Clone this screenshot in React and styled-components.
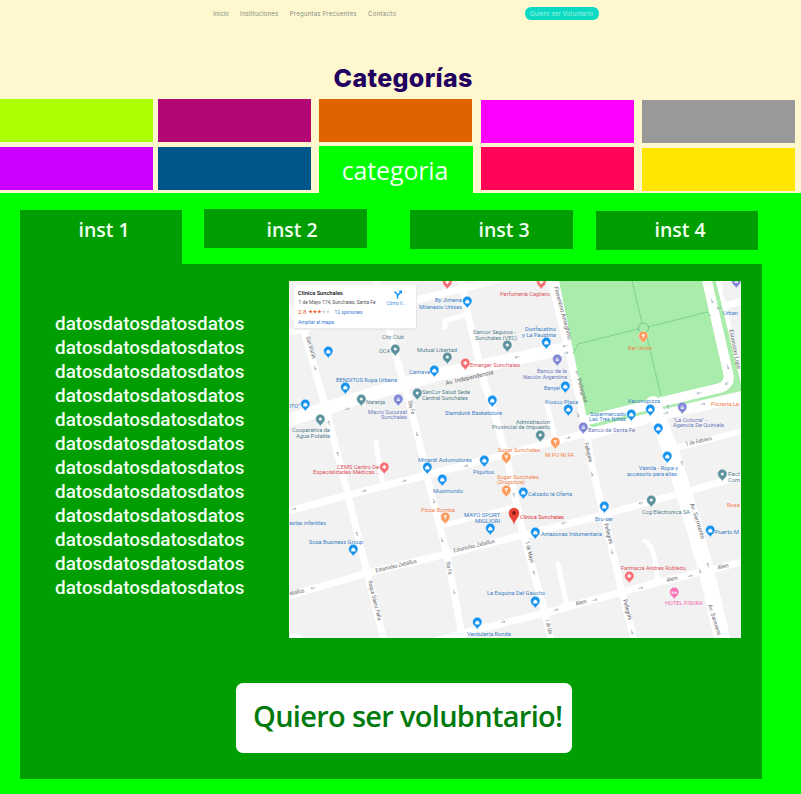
import React from 'react';
import styled, { createGlobalStyle } from 'styled-components';

const GlobalStyle = createGlobalStyle`
  * { box-sizing: border-box; }
  body { margin: 0; background: #fff8cf; }
  a { text-decoration: none; color: inherit; }
`;

const Page = styled.div`
  width: 801px;
  height: 794px;
  overflow: hidden;
  display: flex;
  flex-direction: column;
  background: #fff8cf;
  font-family: Roboto, sans-serif;
`;

const Header = styled.header`
  display: flex;
  align-items: center;
  height: 27px;
  padding-left: 213px;
  font-family: Inter, sans-serif;
  font-size: 6px;
`;

const Nav = styled.nav`
  display: flex;
  gap: 11.4px;
  width: 311.5px;
  color: #858c88;
`;

const NavLink = styled.a`
  white-space: nowrap;
  letter-spacing: ${(p) => p.$track}px;
`;

const VolunteerLink = styled.a`
  width: 74px;
  height: 13px;
  border-radius: 6px;
  background: #0cd9c4;
  color: #a5f3df;
  text-align: center;
  line-height: 13px;
  letter-spacing: 0.18px;
  white-space: nowrap;
`;

const Title = styled.h1`
  margin: 0;
  height: 72px;
  padding: 36px 0 0 333.5px;
  font: 800 25px/30px Inter, sans-serif;
  letter-spacing: 0.35px;
  color: #220060;
`;

const Categories = styled.div`
  display: grid;
  grid-template-columns: 158px 161px 162px 161px 153px;
  grid-template-rows: 48px 46px;
  height: 94px;
`;

const Category = styled.div`
  width: 153px;
  height: 43px;
  margin-top: ${(p) => p.$top || 0}px;
  background: ${(p) => p.$color};
`;

const ActiveCategory = styled.div`
  width: 154px;
  height: 47px;
  margin-top: -1px;
  background: #00ff00;
  color: #effff0;
  font: 400 25px/48px 'Open Sans', sans-serif;
  text-align: center;
  letter-spacing: -0.15px;
  padding-right: 2px;
`;

const Body = styled.main`
  flex: 1;
  background: #00ff00;
  padding: 16px 39px 15px 20px;
`;

const Tabs = styled.div`
  display: flex;
  height: 55px;
`;

const Tab = styled.div`
  width: ${(p) => p.$width}px;
  height: ${(p) => (p.$active ? 54 : 39)}px;
  margin: ${(p) => p.$top}px 0 0 ${(p) => p.$left}px;
  padding-left: ${(p) => p.$inset}px;
  background: #009e00;
  color: #effff0;
  font: 600 19.5px/${(p) => p.$line}px 'Open Sans', sans-serif;
  white-space: nowrap;
`;

const Panel = styled.section`
  width: 742px;
  height: 515px;
  background: #009e00;
  padding-top: 17px;
`;

const Content = styled.div`
  display: grid;
  grid-template-columns: 234px 452px;
  padding-left: 35px;
  height: 357px;
`;

const DataList = styled.ul`
  list-style: none;
  margin: 0;
  padding: 31px 0 0;
  color: #effff0;
  font: 500 18.9px/24px Roboto, sans-serif;
`;

const DataRow = styled.li`
  height: 24px;
`;

const VolunteerButton = styled.button`
  display: block;
  width: 336px;
  height: 70px;
  margin: 45px 0 0 216px;
  padding: 0 0 4px 17px;
  border: 0;
  border-radius: 7px;
  background: #fff;
  color: #007a0c;
  font: 600 29px/66px 'Open Sans', sans-serif;
  letter-spacing: -0.7px;
  text-align: left;
  white-space: nowrap;
`;

const MapView = styled.svg`
  display: block;
  width: 452px;
  height: 357px;
  background: #f2f2f2;
  font-family: Roboto, sans-serif;
`;

const Road = styled.path`
  fill: none;
  stroke: #fff;
  stroke-width: ${(p) => p.$w || 7};
  stroke-linecap: round;
  stroke-linejoin: round;
`;

const Trail = styled.path`
  fill: none;
  stroke: #5fbd7b;
  stroke-width: 0.8;
  stroke-dasharray: 2 0.7;
`;

const Label = styled.text`
  font-size: ${(p) => p.$size || 6}px;
  font-weight: ${(p) => p.$weight || 400};
  fill: ${(p) => p.$color};
`;

const BLUE = '#3b7fc4';
const TEAL = '#54808c';
const RED = '#e0525c';
const ORANGE = '#f5824a';
const VIOLET = '#7078bd';
const STREET = '#65696e';

const PIN = {
  shop: '#1591ee',
  slate: '#5b929e',
  red: '#f46e72',
  orange: '#fb9a5a',
  violet: '#7d86d4',
  pink: '#f673b6',
};

const roads = [
  ['M289 308L304 331L325 405L348 495L367 572L384 641'],
  ['M289 332L304 329L417 300L500 279'],
  ['M376 281L403 381L409 400L427 475L438 520L447 555L463 640'],
  ['M461 281L468 315L485 385L493 408L507 460L523 533L545 614L551 640'],
  ['M583 403L590 457L604 516L622 592L634 640'],
  ['M289 420L365 396L435 375L568 348', 13],
  ['M289 511L348 495L427 475L507 454L582 434L658 415'],
  ['M289 596L367 573L447 554L523 535L603 515L685 492L742 476', 7],
  ['M428 643L463 633L545 613L622 592L655 583L707 571L742 562', 7],
  ['M680 447L742 431', 6],
  ['M376 442L383 487', 5],
  ['M547 405L555 438', 5],
  ['M558 564L567 606', 5],
  ['M645 541Q655 545 658 583', 5],
  ['M445 327L445 321L467 314', 5],
  ['M441 526L513 507', 5],
  ['M289 638Q295 633 300 638', 5],
];

const shopPins = [
  [467, 302], [328, 352], [434, 371], [345, 388], [546, 343], [565, 387],
  [568, 410], [492, 401], [305, 405], [631, 415], [650, 410], [658, 429],
  [667, 457], [484, 461], [427, 468], [442, 480], [523, 493], [604, 507],
  [490, 529], [535, 533], [353, 550], [535, 602], [477, 623], [710, 531],
];

const pins = [
  ...shopPins.map(([x, y]) => [x, y, 'shop']),
  [395, 350, 'slate'], [447, 358, 'slate'], [507, 346, 'slate'],
  [417, 394, 'slate'], [361, 400, 'slate'], [320, 420, 'slate'],
  [540, 436, 'slate'], [651, 501, 'slate'], [722, 475, 'slate'],
  [447, 283, 'red'], [541, 283, 'red'], [465, 364, 'red'],
  [384, 468, 'red'], [629, 577, 'red'],
  [643, 337, 'orange'], [506, 458, 'orange'], [506, 491, 'orange'],
  [555, 443, 'orange'], [445, 518, 'orange'],
  [557, 360, 'violet'], [398, 400, 'violet'], [583, 428, 'violet'],
  [682, 408, 'violet'], [736, 282, 'violet'],
  [674, 593, 'pink'],
];

/* text, x, baseline, width, colour */
const labels = [
  ['City Club', 382, 338.5, 22, TEAL],
  ['OCA', 379, 353, 11, TEAL],
  ['Mutual Libertad', 417, 352, 40, TEAL],
  ['Carnave', 409, 373.5, 21, BLUE],
  ['BENDITOS Ropa Urbana', 336, 381.5, 61, BLUE],
  ['Naranja', 366, 404, 19, TEAL],
  ['By Jimena', 435, 302, 27, BLUE],
  ['Milanesio Unisex', 419, 308.5, 43, BLUE],
  ['Perfumería Cagliero', 500, 295.5, 50, RED],
  ['Sancor Seguros -', 473, 333.5, 43, TEAL],
  ['Sunchales (VEC)', 475, 340, 42, TEAL],
  ['Donfaustino', 525, 330.5, 31, BLUE],
  ['y La Faustina', 522, 337, 34, BLUE],
  ['Emerger Sunchales', 470, 366.5, 50, RED],
  ['Banco de la', 537, 373, 30, VIOLET],
  ['Nación Argentina', 523, 379, 44, VIOLET],
  ['Banyel', 544, 390, 16, BLUE],
  ['Kiosco Plaza', 545, 403.5, 33, BLUE],
  ['SanCor Salud Sede', 422, 394, 48, TEAL],
  ['Central Sunchales', 422, 400, 46, TEAL],
  ['Macro Sucursal', 368, 413.5, 39, VIOLET],
  ['Sunchales', 381, 419, 26, VIOLET],
  ['ITO"', 289.5, 407.5, 10.5, BLUE],
  ['Cooperativa de', 292, 432, 38, TEAL],
  ['Agua Potable', 296, 437.5, 34, TEAL],
  ['Slamdunk Basketstore', 445, 414.5, 57, BLUE],
  ['Admistracion', 516, 423.5, 34, TEAL],
  ['Provincial de Impuesto', 492, 429, 58, TEAL],
  ['Bar Unión', 628, 350, 24, ORANGE],
  ['Keconopizza', 628, 402.5, 32, BLUE],
  ['Urban', 723, 314.5, 15, BLUE],
  ['Pizzería La', 711, 405.5, 28, ORANGE],
  ['Supermercado', 590, 415.5, 36, BLUE],
  ['Las Tres Niñas', 589, 421, 37, BLUE],
  ['Banco de Santa Fe', 588, 431.5, 47, VIOLET],
  ['"La Cotorra" -', 673, 421.5, 34, VIOLET],
  ['Agencia De Quiniela', 673, 427, 51, VIOLET],
  ['Vainila - Ropa y', 639, 470, 39, BLUE],
  ['accesorio para ellas', 627, 475.5, 50, BLUE],
  ['Bru-ser', 595, 520.5, 18, BLUE],
  ['Ccg Electronica SA', 642, 513.5, 48, TEAL],
  ['Fact', 728, 476, 12, TEAL],
  ['Com', 728, 481.5, 12, TEAL],
  ['Rosa', 727, 506.5, 13, ORANGE],
  ['Minardi Automotores', 418, 461.5, 54, BLUE],
  ['CEMS Centro De', 337, 468.5, 42, RED],
  ['Especialidades Médicas...', 313, 474, 66, RED],
  ['Musimundo', 433, 493, 30, BLUE],
  ['Piquitos', 473, 473.5, 21, BLUE],
  ['Sugar Sunchales', 498, 451.5, 42, ORANGE],
  ['Sugar Sunchales', 497, 478.5, 42, ORANGE],
  ['(Drugstore)', 497, 484, 28, ORANGE],
  ['NI FU NI FA', 545, 456.5, 29, ORANGE],
  ['Calzado la Oferta', 528, 495.5, 44, BLUE],
  ['Clinica Sunchales', 520, 519, 44, '#dc3039'],
  ['MAYO SPORT', 464, 517, 36, BLUE],
  ['MIGLIORI', 475, 522.5, 25, BLUE],
  ['Pizza Bomba', 421, 511.5, 34, ORANGE],
  ['estas infantiles', 289.5, 525, 36.5, BLUE],
  ['Sosa Business Group', 309, 543.5, 54, BLUE],
  ['Amazonas Indumentaria', 541, 536, 61, BLUE],
  ['Puerto M', 715, 533.5, 24, BLUE],
  ['Farmacia Andres Robledo', 621, 570, 65, RED],
  ['HOTEL FISURA', 665, 604.5, 38, '#f06ab0'],
  ['La Esquina Del Gaucho', 487, 594.5, 58, BLUE],
  ['Verdulería Ronda', 467, 636, 44, BLUE],
];

/* text, x, y, width, rotation */
const streets = [
  ['San Martín', 306, 337, 23, 74],
  ['Florentino Ameghino', 554, 287, 55, 75],
  ['Av. Independencia', 446, 385, 49, -13],
  ['Pellegrini', 577, 379, 25, 74],
  ['Estanislao Lope', 729, 330, 40, 78],
  ['Sta Fe', 408, 401, 14, 76],
  ['Pellegrini', 584, 443, 20, 76],
  ['1 de Febrero', 686, 446, 27, -13],
  ['Av. Sarmiento', 690, 504, 37, 72],
  ['Av. Sarmient', 708, 605, 32, 73],
  ['Estanislao Zeballos', 376, 572.5, 42, -13.5],
  ['Estanislao Zeballos', 454, 552.5, 42, -13.5],
  ['eballos', 290, 595.5, 15, -13],
  ['Roque Sáenz Peña', 368, 581, 41, 76],
  ['Sta Fe', 446, 562, 13, 79],
  ['1 de Mayo', 525, 542, 22, 75],
  ['1 de Ma', 545, 620, 15, 75],
  ['Pellegrini', 604, 524, 21, 75],
  ['Pellegrini', 623, 600, 21, 75],
  ['Alem', 576, 605.5, 11, -12],
  ['Alem', 667, 582, 11, -12],
  ['Alem', 718, 569.5, 11, -12],
];

/* x, y, rotation of one-way arrows */
const arrows = [
  [315, 368, 75], [517, 357, 167], [347, 409, -13], [329, 423, 256], [338, 454, 256],
  [417, 434, 76], [364, 491, -13], [404, 481, -13], [294, 509, -13], [466, 466, -13],
  [434, 501, 76], [514, 495, 256], [568, 438, -13], [564, 523, 167], [313, 588, 167],
  [357, 534, 256], [442, 540, 76], [454, 592, 76], [503, 622, -13], [556, 610, -13],
  [595, 600, -13], [641, 588, -13], [690, 576, -13], [700, 571, 75], [708, 565, 255],
  [612, 552, 75], [632, 632, 75], [534, 573, 255], [565, 346, 167], [566, 353, -13],
  [577, 373, 255], [712, 301, 75], [719, 308, 167], [728, 367, 75], [727, 383, 130],
  [699, 393, 167], [703, 404, -13], [668, 407, 255], [666, 413, -13], [578, 415, 75],
  [592, 474, 75], [641, 503, 167], [682, 463, 255],
];

const starPoints = '0,-2.2 0.6,-0.7 2.2,-0.7 0.9,0.3 1.3,1.8 0,0.9 -1.3,1.8 -0.9,0.3 -2.2,-0.7 -0.6,-0.7';

function Pin({ x, y, kind }) {
  return (
    <g transform={`translate(${x + 0.3} ${y})`}>
      <path
        d="M0 6.5C-.7 3.7-4.7 2.6-4.7-1A4.7 4.7 0 0 1 4.7-1C4.7 2.6 .7 3.7 0 6.5Z"
        fill={PIN[kind]}
        stroke="#fff"
        strokeWidth=".4"
      />
      {kind === 'shop' && <path d="M-1.9-.8H1.9V1.2H-1.9ZM-1-.8V-2H1V-.8" fill="#fff" stroke="#fff" strokeWidth=".4" />}
      {kind === 'slate' && <circle cy="-1" r="1.6" fill="#f2f6f6" />}
      {kind === 'red' && <path d="M0-3V1M-2-1H2" stroke="#fff" strokeWidth="1.3" />}
      {kind === 'orange' && <path d="M-1-3V-1H1V-3M0-3V1.5" fill="none" stroke="#fff" strokeWidth=".8" />}
      {kind === 'violet' && <path d="M-2.2-1.4L0-2.8L2.2-1.4ZM-1.7-.7H1.7V1H-1.7Z" fill="#e4e6fb" />}
      {kind === 'pink' && <path d="M-2.2-2V1M-2.2 0H2.2V1M-.5-.8H2" fill="none" stroke="#fff" strokeWidth=".8" />}
    </g>
  );
}

function InfoCard() {
  const fit = 'spacingAndGlyphs';
  return (
    <g>
      <rect x="293.5" y="285.5" width="123" height="44" fill="#d9d9d9" />
      <rect x="293.5" y="285" width="122.5" height="43.5" fill="#fff" />
      <Label x="298" y="294.8" textLength="45" lengthAdjust={fit} $color="#222" $weight="600" $size={6.2}>Clinica Sunchales</Label>
      <Label x="298.5" y="303.6" textLength="77" lengthAdjust={fit} $color="#555" $size={5.5}>1 de Mayo 174, Sunchales, Santa Fe</Label>
      <Label x="298" y="314" textLength="8.5" lengthAdjust={fit} $color="#ee5a24">2.8</Label>
      {[0, 1, 2, 3, 4].map((i) => (
        <polygon key={i} points={starPoints} fill={i < 3 ? '#ee6430' : '#d5d5d5'} transform={`translate(${310.5 + i * 4.4} 311.7)`} />
      ))}
      <Label x="334.5" y="314" textLength="28" lengthAdjust={fit} $color="#3578d8">12 opiniones</Label>
      <Label x="298" y="324.2" textLength="36" lengthAdjust={fit} $color="#3578d8">Ampliar el mapa</Label>
      <path d="M397.5 298.5V294.5L394.5 291.5M397.5 295.5L401 291.8" fill="none" stroke="#1591ee" strokeWidth="1.5" />
      <path d="M398.5 290.5H402V294Z" fill="#1591ee" />
      <Label x="386.5" y="304.8" textLength="19.5" lengthAdjust={fit} $color="#3b93e0" $size={5.5}>Cómo ll...</Label>
    </g>
  );
}

function CityMap() {
  return (
    <MapView viewBox="289 281 452 357" role="img" aria-label="Clinica Sunchales">
      {roads.map(([d, w]) => <Road key={d} d={d} $w={w} />)}
      <Road d="M554 276L572 348L585 404L589 428" $w={15} />
      <Road d="M590 434L658 415L742 397" $w={11} />
      <Road d="M719 276V308L742 301M718 306L742 395" $w={7} />
      <path d="M559 281H716L741 384V391L664 409L594 427Q589 428 587 419Z" fill="#aaecab" />
      <Road d="M718 281L741 374" $w={4} />
      <Road d="M588 420L653 404L720 388Q731 384 728 373L706 277" $w={10} />
      <path d="M560 281L589 410Q590 415 596 413L655 398L717 382Q725 380 723 373L702 281Z" fill="#aaecab" />
      <Road d="M653 404L673 457L688 506L707 573L723 642" $w={16} />
      <Trail d="M632 281L642 323M648 327L707 312L711 316M638 329L578 344L573 354M646 333L661 396" />
      <circle cx="643.5" cy="328" r="5" fill="none" stroke="#5fbd7b" strokeWidth=".8" />
      {arrows.map(([x, y, r]) => (
        <path key={`${x}-${y}`} d="M-2.3 0H2M.5-1.2L2 0L.5 1.2" fill="none" stroke="#a3a9b3" strokeWidth=".7" transform={`translate(${x} ${y}) rotate(${r})`} />
      ))}
      {streets.map(([text, x, y, w, r]) => (
        <Label key={`${x}-${y}`} textLength={w} lengthAdjust="spacingAndGlyphs" $size={5.8} $color={STREET} transform={`translate(${x} ${y}) rotate(${r})`}>{text}</Label>
      ))}
      {pins.map(([x, y, kind]) => <Pin key={`${x}-${y}`} x={x} y={y} kind={kind} />)}
      {labels.map(([text, x, y, w, color]) => (
        <Label key={`${x}-${y}`} x={x} y={y} textLength={w} lengthAdjust="spacingAndGlyphs" $color={color}>{text}</Label>
      ))}
      <path d="M514 525C513 519 508.8 518 508.8 513A5.2 5.2 0 0 1 519.2 513C519.2 518 515 519 514 525Z" fill="#ea4335" />
      <circle cx="514" cy="513" r="1.9" fill="#8c1b14" />
      <InfoCard />
    </MapView>
  );
}

const tabs = [
  { name: 'inst 1', width: 162, top: 1, left: 0, inset: 58.5, line: 40, active: true },
  { name: 'inst 2', width: 163, top: 0, left: 22, inset: 62.5, line: 41 },
  { name: 'inst 3', width: 163, top: 1, left: 43, inset: 68.5, line: 40 },
  { name: 'inst 4', width: 162, top: 2, left: 23, inset: 58.5, line: 38 },
];

export default function App() {
  return (
    <>
      <GlobalStyle />
      <Page>
        <Header>
          <Nav>
            <NavLink href="#" $track={0.1}>Inicio</NavLink>
            <NavLink href="#" $track={0.18}>Instituciones</NavLink>
            <NavLink href="#" $track={0.24}>Preguntas Frecuentes</NavLink>
            <NavLink href="#" $track={0.32}>Contacto</NavLink>
          </Nav>
          <VolunteerLink href="#">Quiero ser Voluntario</VolunteerLink>
        </Header>
        <Title>Categorías</Title>
        <Categories>
          <Category $color="#aaff00" />
          <Category $color="#b20874" />
          <Category $color="#e06300" />
          <Category $color="#ff00ff" $top={1} />
          <Category $color="#999999" $top={1} />
          <Category $color="#cc00ff" />
          <Category $color="#005688" />
          <ActiveCategory>categoria</ActiveCategory>
          <Category $color="#ff0558" />
          <Category $color="#ffe600" $top={1} />
        </Categories>
        <Body>
          <Tabs>
            {tabs.map((t) => (
              <Tab key={t.name} $width={t.width} $top={t.top} $left={t.left} $inset={t.inset} $line={t.line} $active={t.active}>{t.name}</Tab>
            ))}
          </Tabs>
          <Panel>
            <Content>
              <DataList>
                {Array.from({ length: 12 }, (_, i) => <DataRow key={i}>datosdatosdatosdatos</DataRow>)}
              </DataList>
              <CityMap />
            </Content>
            <VolunteerButton>Quiero ser volubntario!</VolunteerButton>
          </Panel>
        </Body>
      </Page>
    </>
  );
}
